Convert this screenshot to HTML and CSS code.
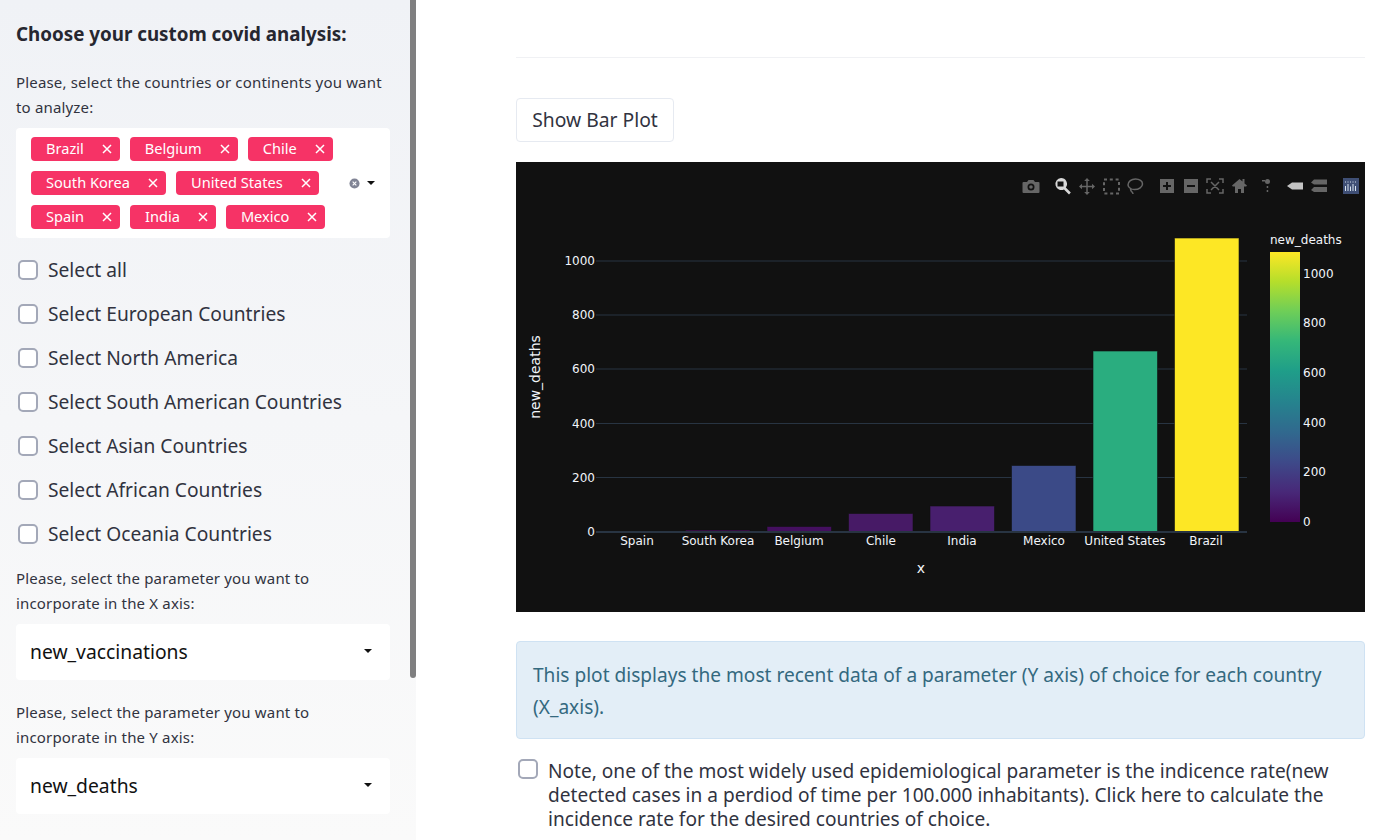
FILE: index.html
```html
<!DOCTYPE html>
<html lang="en">
<head>
    <meta charset="UTF-8">
    <title>Covid analysis</title>
    <link rel="stylesheet" href="styles.css">
</head>
<body>
<div class="app">
    <aside class="sidebar">
        <div class="scrollbar"></div>
        <h3 class="side-title">Choose your custom covid analysis:</h3>
        <p class="field-label">Please, select the countries or continents you want to analyze:</p>
        <div class="multiselect">
            <div class="tags">
                <span class="tag">Brazil<svg viewBox="0 0 10 10"><path d="M1 1L9 9M9 1L1 9"/></svg></span>
                <span class="tag">Belgium<svg viewBox="0 0 10 10"><path d="M1 1L9 9M9 1L1 9"/></svg></span>
                <span class="tag">Chile<svg viewBox="0 0 10 10"><path d="M1 1L9 9M9 1L1 9"/></svg></span>
                <span class="tag">South Korea<svg viewBox="0 0 10 10"><path d="M1 1L9 9M9 1L1 9"/></svg></span>
                <span class="tag">United States<svg viewBox="0 0 10 10"><path d="M1 1L9 9M9 1L1 9"/></svg></span>
                <span class="tag">Spain<svg viewBox="0 0 10 10"><path d="M1 1L9 9M9 1L1 9"/></svg></span>
                <span class="tag">India<svg viewBox="0 0 10 10"><path d="M1 1L9 9M9 1L1 9"/></svg></span>
                <span class="tag">Mexico<svg viewBox="0 0 10 10"><path d="M1 1L9 9M9 1L1 9"/></svg></span>
            </div>
            <div class="controls">
                <svg class="clear-icon" viewBox="0 0 12 12"><circle cx="6" cy="6" r="5.5"/><path d="M4 4L8 8M8 4L4 8"/></svg>
                <span class="caret"></span>
            </div>
        </div>
        <ul class="checks">
            <li><span class="box"></span>Select all</li>
            <li><span class="box"></span>Select European Countries</li>
            <li><span class="box"></span>Select North America</li>
            <li><span class="box"></span>Select South American Countries</li>
            <li><span class="box"></span>Select Asian Countries</li>
            <li><span class="box"></span>Select African Countries</li>
            <li><span class="box"></span>Select Oceania Countries</li>
        </ul>
        <p class="field-label label-x">Please, select the parameter you want to incorporate in the X axis:</p>
        <div class="select">new_vaccinations<span class="caret"></span></div>
        <p class="field-label label-y">Please, select the parameter you want to incorporate in the Y axis:</p>
        <div class="select">new_deaths<span class="caret"></span></div>
    </aside>

    <main class="content">
        <hr class="rule">
        <button class="plot-btn">Show Bar Plot</button>

        <svg class="chart" viewBox="0 0 849 450" width="849" height="450">
            <defs>
                <linearGradient id="viridis" x1="0" y1="1" x2="0" y2="0">
                    <stop offset="0" stop-color="#440154"/>
                    <stop offset="0.11" stop-color="#482878"/>
                    <stop offset="0.22" stop-color="#3e4989"/>
                    <stop offset="0.33" stop-color="#31688e"/>
                    <stop offset="0.44" stop-color="#26828e"/>
                    <stop offset="0.56" stop-color="#1f9e89"/>
                    <stop offset="0.67" stop-color="#35b779"/>
                    <stop offset="0.78" stop-color="#6ece58"/>
                    <stop offset="0.89" stop-color="#b5de2b"/>
                    <stop offset="1" stop-color="#fde725"/>
                </linearGradient>
            </defs>

            <g class="grid">
                <path d="M80 99H731M80 153H731M80 207H731M80 261.500H731M80 315.500H731"/>
            </g>

            <g class="bars">
                <rect x="169.500" y="368" width="64.500" height="2" fill="#440854"/>
                <rect x="251" y="364.500" width="64.500" height="5.500" fill="#440f5f"/>
                <rect x="332.500" y="351.500" width="64.500" height="18.500" fill="#471a66"/>
                <rect x="414" y="344" width="64.500" height="26" fill="#481f6e"/>
                <rect x="495.500" y="303.500" width="64.500" height="66.500" fill="#3b4a87"/>
                <rect x="577" y="189" width="64.500" height="181" fill="#2aad7f"/>
                <rect x="658.500" y="76" width="64.500" height="294" fill="#fde725"/>
            </g>
            <path class="zero" d="M80 370H731"/>

            <g class="ticks ticks-y">
                <text x="79" y="374">0</text>
                <text x="79" y="320">200</text>
                <text x="79" y="266">400</text>
                <text x="79" y="211">600</text>
                <text x="79" y="157">800</text>
                <text x="79" y="103">1000</text>
            </g>
            <g class="ticks ticks-x">
                <text x="121" y="383">Spain</text>
                <text x="202" y="383">South Korea</text>
                <text x="283" y="383">Belgium</text>
                <text x="365" y="383">Chile</text>
                <text x="446" y="383">India</text>
                <text x="528" y="383">Mexico</text>
                <text x="609" y="383">United States</text>
                <text x="690" y="383">Brazil</text>
            </g>
            <text class="axis-title" x="405" y="411">x</text>
            <text class="axis-title" transform="translate(24 215) rotate(-90)">new_deaths</text>

            <text class="cb-title" x="754" y="82">new_deaths</text>
            <rect x="754" y="90" width="30" height="270" fill="url(#viridis)"/>
            <g class="ticks cb-ticks">
                <text x="787" y="364">0</text>
                <text x="787" y="314">200</text>
                <text x="787" y="265">400</text>
                <text x="787" y="215">600</text>
                <text x="787" y="165">800</text>
                <text x="787" y="116">1000</text>
            </g>

            <!-- modebar -->
            <g class="modebar">
                <path d="M507 20h4l1.500-2h5l1.500 2h3.500a1 1 0 0 1 1 1v9a1 1 0 0 1-1 1h-15a1 1 0 0 1-1-1v-9a1 1 0 0 1 1-1zM515 21.500a3.500 3.500 0 1 0 0 7a3.500 3.500 0 0 0 0-7zM515 23.200a1.800 1.800 0 1 1 0 3.600a1.800 1.800 0 0 1 0-3.600z" fill-rule="evenodd"/>
                <path class="active" d="M545 16a6 6 0 0 1 4.800 9.600l5 5-1.800 1.800-5-5A6 6 0 1 1 545 16zM541.500 19.500v5h6v-5z" fill-rule="evenodd"/>
                <path class="outline" d="M571 18v13M564.500 24.500h13"/>
                <path d="M571 16l2.800 3h-5.600zM571 33l-2.800-3h5.600zM563 24.500l3-2.800v5.600zM579 24.500l-3-2.800v5.600z"/>
                <path class="dotted" d="M588 17.500h15v14h-15z"/>
                <path class="outline" d="M612 23c0-3.500 3.500-6 7.500-6s7 2.200 7 5-3.500 5.500-8 5.500c-1.500 0-3-.300-4-1-1.500-1-2.500-2-2.500-3.500zM615 26c-1 1.500 0 3 1 4 .5.500 1 1.500 1 2"/>
                <path d="M644 17h14v14h-14zM650 20v3h-3v2h3v3h2v-3h3v-2h-3v-3z" fill-rule="evenodd"/>
                <path d="M668 17h14v14h-14zM671 23v2h8v-2z" fill-rule="evenodd"/>
                <path class="outline" d="M691 21v-4h4M703 17h4v4M707 27v4h-4M695 31h-4v-4M695 20l8 8M703 20l-8 8"/>
                <path d="M723.500 17l3 2.600V17h2v4.400l2.500 2.100-.8 1H728v6.500h-3v-4h-3v4h-3v-6.500h-2.200l-.8-1z"/>
                <path d="M746 18h3v1.500h-3zM751.500 17a2.500 2.500 0 1 1 0 5a2.500 2.500 0 0 1 0-5zM750.700 24h1.500v2h-1.500zM750.700 28h1.500v2h-1.500z"/>
                <path class="bright" d="M771 24l5-3.500h11v7h-11z"/>
                <path d="M795 20.500l3-3h13v5h-13zM795 28l3-3h13v5h-13z"/>
                <rect class="logo" x="827" y="16" width="16" height="16"/>
                <path class="logo-bars" d="M829.500 24v5M832 22v7M834.500 24.500v4.500M837 22v7M839.500 24v5M829.500 19.500v1M832 19.500v1M834.500 19.500v1M837 19.500v1M839.500 19.500v1"/>
            </g>
        </svg>

        <div class="info">This plot displays the most recent data of a parameter (Y axis) of choice for each country (X_axis).</div>

        <div class="note">
            <span class="box"></span>
            <span>Note, one of the most widely used epidemiological parameter is the indicence rate(new detected cases in a perdiod of time per 100.000 inhabitants). Click here to calculate the incidence rate for the desired countries of choice.</span>
        </div>
    </main>
</div>
</body>
</html>
```

FILE: styles.css
```css
html, body {
    margin: 0;
    height: 100%;
    overflow: hidden;
    background: white;
}
body {
    font-family: "Noto Sans", Roboto, sans-serif;
    color: #31333f;
}
.app {
    display: flex;
    height: 840px;
}

/* sidebar */
.sidebar {
    position: relative;
    width: 416px;
    height: 840px;
    flex-shrink: 0;
    box-sizing: border-box;
    padding: 0 26px 0 16px;
    background: linear-gradient(180deg, #f0f2f6, #fafafa);
    overflow: hidden;
}
.scrollbar {
    position: absolute;
    top: 0;
    right: 0;
    width: 6px;
    height: 678px;
    background: #7f7f80;
    border-radius: 0 0 3px 3px;
}
.side-title {
    margin: 0;
    padding-top: 22px;
    font-size: 18.800px;
    line-height: 24px;
    font-weight: 700;
    color: #262730;
}
.field-label {
    margin: 0;
    font-size: 15px;
    letter-spacing: 0.170px;
    line-height: 25px;
}
.sidebar .side-title + .field-label {
    margin-top: 24px;
}
.multiselect {
    display: flex;
    align-items: center;
    margin-top: 8px;
    height: 110px;
    box-sizing: border-box;
    padding-left: 15px;
    background: white;
    border-radius: 4px;
}
.tags {
    display: flex;
    flex-wrap: wrap;
    gap: 10px;
    width: 310px;
}
.tag {
    display: flex;
    align-items: center;
    justify-content: space-between;
    box-sizing: border-box;
    height: 24px;
    padding: 0 8px 2px 15px;
    background: #f63366;
    border-radius: 4px;
    color: white;
    font-size: 14.600px;
}
.tag svg {
    width: 10px;
    height: 10px;
    margin: 2px 0 0 18px;
}
.tag path {
    stroke: white;
    stroke-width: 1.500;
    fill: none;
}
.controls {
    display: flex;
    align-items: center;
    gap: 7px;
    margin-left: 8px;
}
.clear-icon {
    width: 11px;
    height: 11px;
}
.clear-icon circle {
    fill: #808495;
}
.clear-icon path {
    stroke: white;
    stroke-width: 1.200;
}
.caret {
    display: block;
    width: 0;
    height: 0;
    border-left: 4px solid transparent;
    border-right: 4px solid transparent;
    border-top: 4px solid #111;
}
.checks {
    list-style: none;
    margin: 10px 0 0;
    padding: 0;
}
.checks li {
    display: flex;
    align-items: center;
    gap: 10px;
    box-sizing: border-box;
    height: 44px;
    padding: 0 0 2px 2px;
    font-size: 19.200px;
}
.checks .box {
    margin-top: 2px;
}
.box {
    display: block;
    flex-shrink: 0;
    box-sizing: border-box;
    width: 20px;
    height: 20px;
    background: white;
    border: 2px solid #a3a8b8;
    border-radius: 5px;
}
.label-x {
    margin-top: 10px;
}
.label-y {
    margin-top: 20px;
}
.select {
    display: flex;
    align-items: center;
    justify-content: space-between;
    box-sizing: border-box;
    height: 56px;
    margin-top: 8px;
    padding: 0 18px 2px 14px;
    background: white;
    border-radius: 4px;
    color: #111;
    font-size: 19.300px;
}

/* main column */
.content {
    width: 849px;
    margin-left: 100px;
}
.rule {
    margin: 57px 0 0;
    border: none;
    border-top: 1px solid #f0f1f4;
}
.plot-btn {
    display: block;
    margin-top: 40px;
    width: 158px;
    height: 44px;
    padding: 0 0 2px;
    background: white;
    border: 1px solid #e6eaf1;
    border-radius: 4px;
    color: #31333f;
    font-family: inherit;
    font-size: 19.300px;
}
.chart {
    display: block;
    margin-top: 20px;
    background: #111111;
}
.grid path {
    stroke: #283442;
    stroke-width: 1;
    fill: none;
}
.bars rect {
    stroke: #111111;
    stroke-opacity: 0.6;
    stroke-width: 1;
}
.zero {
    stroke: #283442;
    stroke-width: 2;
}
.chart text {
    font-family: "DejaVu Sans", sans-serif;
    font-size: 12px;
    fill: #f2f5fa;
}
.ticks-y text {
    text-anchor: end;
}
.ticks-x text {
    text-anchor: middle;
}
.chart .axis-title {
    font-size: 14px;
    text-anchor: middle;
}
.modebar path {
    fill: #666666;
}
.modebar .active {
    fill: #d8d8d8;
}
.modebar .bright {
    fill: #c4c4c4;
}
.modebar .outline {
    fill: none;
    stroke: #666666;
    stroke-width: 1.500;
}
.modebar .dotted {
    fill: none;
    stroke: #666666;
    stroke-width: 2;
    stroke-dasharray: 3 2.800;
}
.modebar .logo {
    fill: #3f4f75;
}
.modebar .logo-bars {
    fill: none;
    stroke: #d8e4f0;
    stroke-width: 1;
}
.info {
    box-sizing: border-box;
    height: 98px;
    margin-top: 29px;
    padding: 17px 16px;
    background: #e3eef7;
    border: 1px solid #cfe2f3;
    border-radius: 4px;
    color: #34697f;
    font-size: 19.100px;
    line-height: 32px;
}
.note {
    display: flex;
    gap: 10px;
    margin-top: 20px;
    padding-left: 2px;
    font-size: 19.100px;
    line-height: 24px;
}
```
